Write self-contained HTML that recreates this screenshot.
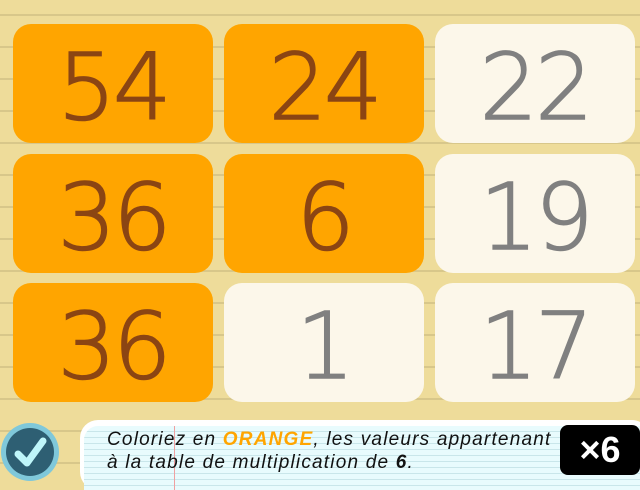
<!DOCTYPE html>
<html><head><style>
body{margin:0;width:640px;height:480px;overflow:hidden;position:relative;
background:#EEDC9A repeating-linear-gradient(to bottom,transparent 0 14px,#D8C78A 14px 16px,transparent 16px 32px);
font-family:"Liberation Sans",sans-serif;}
.c{position:absolute;width:200px;height:119px;border-radius:18px;display:flex;align-items:center;justify-content:center;font-family:"DejaVu Sans ExtraLight","DejaVu Sans",sans-serif;font-weight:200;font-size:92px;letter-spacing:-3px;padding-top:8px;box-sizing:border-box;-webkit-text-stroke:1.5px currentColor}
.o{background:#FFA500;color:#8B4513}
.w{background:#FCF7EA;color:#808080}
.p{position:absolute;left:80px;top:420px;width:570px;height:70px;border-radius:18px;background:#FFFFFF;}
.pi{position:absolute;left:4px;top:6px;right:0;bottom:0;border-radius:14px 0 0 0;
background:#E8FBFD repeating-linear-gradient(to bottom,transparent 0 5px,#C9E6EA 5px 6px);}
.t{position:absolute;left:27px;top:8px;font-style:italic;font-size:19px;letter-spacing:1.2px;line-height:23px;color:#111;white-space:nowrap}
</style></head><body>
<div class="c o" style="left:13px;top:24px">54</div>
<div class="c o" style="left:224px;top:24px">24</div>
<div class="c w" style="left:435px;top:24px">22</div>
<div class="c o" style="left:13px;top:154px">36</div>
<div class="c o" style="left:224px;top:154px">6</div>
<div class="c w" style="left:435px;top:154px">19</div>
<div class="c o" style="left:13px;top:283px">36</div>
<div class="c w" style="left:224px;top:283px">1</div>
<div class="c w" style="left:435px;top:283px">17</div>
<div class="p"><div class="pi"></div>
<div style="position:absolute;left:94px;top:6px;width:1px;height:64px;background:#F0A0A0"></div>
<div class="t">Coloriez en <b style="color:#FFA500">ORANGE</b>, les valeurs appartenant<br>à la table de multiplication de <b>6</b>.</div>
</div>
<div style="position:absolute;left:560px;top:425px;width:80px;height:50px;background:#000;border-radius:8px;color:#fff;font-weight:bold;font-size:36px;display:flex;align-items:center;justify-content:center">×6</div>
<div style="position:absolute;left:1px;top:423px;width:58px;height:58px;border-radius:50%;background:#7FC8DA"></div>
<div style="position:absolute;left:6px;top:428px;width:48px;height:48px;border-radius:50%;background:#2E5F73"></div>
<svg style="position:absolute;left:6px;top:428px" width="48" height="48"><path d="M12 26 L21 35 L37 13" stroke="#BFF6FA" stroke-width="7" fill="none" stroke-linecap="round" stroke-linejoin="round"/></svg>
</body></html>
